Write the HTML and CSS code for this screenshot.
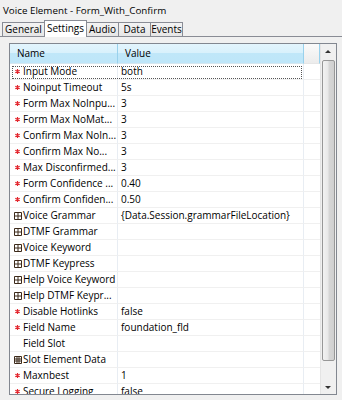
FILE: index.html
```html
<!DOCTYPE html>
<html>
<head>
<meta charset="utf-8">
<link rel="stylesheet" href="styles.css">
</head>
<body>
<div class="title">Voice Element - Form_With_Confirm</div>
<div class="tabs">
  <div class="tab t1">General</div>
  <div class="tab t2 active">Settings</div>
  <div class="tab t3">Audio</div>
  <div class="tab t4">Data</div>
  <div class="tab t5">Events</div>
</div>
<div class="panel">
  <div class="table">
    <div class="grid">
      <div class="row head">
        <div class="cell">Name</div>
        <div class="cell">Value</div>
        <div class="cell filler"></div>
      </div>
      <div class="row focus">
        <div class="cell name"><svg class="star" width="5" height="5" viewBox="0 0 5 5"><path d="M2.5 0v5M0.3 1.2l4.4 2.6M0.3 3.8l4.4-2.6" stroke="#e3262e" stroke-width="1.2"/></svg>Input Mode</div>
        <div class="cell">both</div><div class="cell filler"></div>
      </div>
      <div class="row">
        <div class="cell name"><svg class="star" width="5" height="5" viewBox="0 0 5 5"><path d="M2.5 0v5M0.3 1.2l4.4 2.6M0.3 3.8l4.4-2.6" stroke="#e3262e" stroke-width="1.2"/></svg>Noinput Timeout</div>
        <div class="cell">5s</div><div class="cell filler"></div>
      </div>
      <div class="row">
        <div class="cell name"><svg class="star" width="5" height="5" viewBox="0 0 5 5"><path d="M2.5 0v5M0.3 1.2l4.4 2.6M0.3 3.8l4.4-2.6" stroke="#e3262e" stroke-width="1.2"/></svg>Form Max NoInpu...</div>
        <div class="cell">3</div><div class="cell filler"></div>
      </div>
      <div class="row">
        <div class="cell name"><svg class="star" width="5" height="5" viewBox="0 0 5 5"><path d="M2.5 0v5M0.3 1.2l4.4 2.6M0.3 3.8l4.4-2.6" stroke="#e3262e" stroke-width="1.2"/></svg>Form Max NoMat...</div>
        <div class="cell">3</div><div class="cell filler"></div>
      </div>
      <div class="row">
        <div class="cell name"><svg class="star" width="5" height="5" viewBox="0 0 5 5"><path d="M2.5 0v5M0.3 1.2l4.4 2.6M0.3 3.8l4.4-2.6" stroke="#e3262e" stroke-width="1.2"/></svg>Confirm Max NoIn...</div>
        <div class="cell">3</div><div class="cell filler"></div>
      </div>
      <div class="row">
        <div class="cell name"><svg class="star" width="5" height="5" viewBox="0 0 5 5"><path d="M2.5 0v5M0.3 1.2l4.4 2.6M0.3 3.8l4.4-2.6" stroke="#e3262e" stroke-width="1.2"/></svg>Confirm Max No...</div>
        <div class="cell">3</div><div class="cell filler"></div>
      </div>
      <div class="row">
        <div class="cell name"><svg class="star" width="5" height="5" viewBox="0 0 5 5"><path d="M2.5 0v5M0.3 1.2l4.4 2.6M0.3 3.8l4.4-2.6" stroke="#e3262e" stroke-width="1.2"/></svg>Max Disconfirmed...</div>
        <div class="cell">3</div><div class="cell filler"></div>
      </div>
      <div class="row">
        <div class="cell name"><svg class="star" width="5" height="5" viewBox="0 0 5 5"><path d="M2.5 0v5M0.3 1.2l4.4 2.6M0.3 3.8l4.4-2.6" stroke="#e3262e" stroke-width="1.2"/></svg>Form Confidence ...</div>
        <div class="cell">0.40</div><div class="cell filler"></div>
      </div>
      <div class="row">
        <div class="cell name"><svg class="star" width="5" height="5" viewBox="0 0 5 5"><path d="M2.5 0v5M0.3 1.2l4.4 2.6M0.3 3.8l4.4-2.6" stroke="#e3262e" stroke-width="1.2"/></svg>Confirm Confiden...</div>
        <div class="cell">0.50</div><div class="cell filler"></div>
      </div>
      <div class="row">
        <div class="cell name"><svg class="ico" width="8" height="8" viewBox="0 0 8 8"><path d="M0.5 0.5h7v7h-7zM4 0.5v7M0.5 4h7" fill="none" stroke="#3c2a1a" stroke-width="1"/></svg>Voice Grammar</div>
        <div class="cell">{Data.Session.grammarFileLocation}</div><div class="cell filler"></div>
      </div>
      <div class="row">
        <div class="cell name"><svg class="ico" width="8" height="8" viewBox="0 0 8 8"><path d="M0.5 0.5h7v7h-7zM4 0.5v7M0.5 4h7" fill="none" stroke="#3c2a1a" stroke-width="1"/></svg>DTMF Grammar</div>
        <div class="cell"></div><div class="cell filler"></div>
      </div>
      <div class="row">
        <div class="cell name"><svg class="ico" width="8" height="8" viewBox="0 0 8 8"><path d="M0.5 0.5h7v7h-7zM4 0.5v7M0.5 4h7" fill="none" stroke="#3c2a1a" stroke-width="1"/></svg>Voice Keyword</div>
        <div class="cell"></div><div class="cell filler"></div>
      </div>
      <div class="row">
        <div class="cell name"><svg class="ico" width="8" height="8" viewBox="0 0 8 8"><path d="M0.5 0.5h7v7h-7zM4 0.5v7M0.5 4h7" fill="none" stroke="#3c2a1a" stroke-width="1"/></svg>DTMF Keypress</div>
        <div class="cell"></div><div class="cell filler"></div>
      </div>
      <div class="row">
        <div class="cell name"><svg class="ico" width="8" height="8" viewBox="0 0 8 8"><path d="M0.5 0.5h7v7h-7zM4 0.5v7M0.5 4h7" fill="none" stroke="#3c2a1a" stroke-width="1"/></svg>Help Voice Keyword</div>
        <div class="cell"></div><div class="cell filler"></div>
      </div>
      <div class="row">
        <div class="cell name"><svg class="ico" width="8" height="8" viewBox="0 0 8 8"><path d="M0.5 0.5h7v7h-7zM4 0.5v7M0.5 4h7" fill="none" stroke="#3c2a1a" stroke-width="1"/></svg>Help DTMF Keypr...</div>
        <div class="cell"></div><div class="cell filler"></div>
      </div>
      <div class="row">
        <div class="cell name"><svg class="star" width="5" height="5" viewBox="0 0 5 5"><path d="M2.5 0v5M0.3 1.2l4.4 2.6M0.3 3.8l4.4-2.6" stroke="#e3262e" stroke-width="1.2"/></svg>Disable Hotlinks</div>
        <div class="cell">false</div><div class="cell filler"></div>
      </div>
      <div class="row">
        <div class="cell name"><svg class="star" width="5" height="5" viewBox="0 0 5 5"><path d="M2.5 0v5M0.3 1.2l4.4 2.6M0.3 3.8l4.4-2.6" stroke="#e3262e" stroke-width="1.2"/></svg>Field Name</div>
        <div class="cell">foundation_fld</div><div class="cell filler"></div>
      </div>
      <div class="row">
        <div class="cell name"><span class="blank"></span>Field Slot</div>
        <div class="cell"></div><div class="cell filler"></div>
      </div>
      <div class="row">
        <div class="cell name"><svg class="ico" width="8" height="8" viewBox="0 0 8 8"><path d="M0.5 0.5h7v7h-7zM3 0.5v7M5 0.5v7M0.5 3h7M0.5 5h7" fill="none" stroke="#3c2a1a" stroke-width="1"/></svg>Slot Element Data</div>
        <div class="cell"></div><div class="cell filler"></div>
      </div>
      <div class="row">
        <div class="cell name"><svg class="star" width="5" height="5" viewBox="0 0 5 5"><path d="M2.5 0v5M0.3 1.2l4.4 2.6M0.3 3.8l4.4-2.6" stroke="#e3262e" stroke-width="1.2"/></svg>Maxnbest</div>
        <div class="cell">1</div><div class="cell filler"></div>
      </div>
      <div class="row">
        <div class="cell name"><svg class="star" width="5" height="5" viewBox="0 0 5 5"><path d="M2.5 0v5M0.3 1.2l4.4 2.6M0.3 3.8l4.4-2.6" stroke="#e3262e" stroke-width="1.2"/></svg>Secure Logging</div>
        <div class="cell">false</div><div class="cell filler"></div>
      </div>
    </div>
    <div class="scrollbar">
      <div class="arrow up"></div>
      <div class="track"><div class="thumb"></div></div>
      <div class="arrow down"></div>
    </div>
  </div>
</div>
</body>
</html>
```
FILE: styles.css
```css
html, body {
  margin: 0;
  padding: 0;
}
body {
  width: 342px;
  height: 400px;
  overflow: hidden;
  background: #f0f0f0;
  font-family: "Open Sans", "Noto Sans", sans-serif;
  font-size: 10px;
  color: #000;
}
.title {
  height: 17px;
  padding-top: 3px;
  padding-left: 3px;
  line-height: 16px;
  font-size: 9.8px;
}
.tabs {
  display: flex;
  align-items: flex-end;
  height: 16px;
  border-bottom: 1px solid #898c95;
  padding-left: 2px;
}
.tab {
  height: 13px;
  line-height: 13px;
  text-align: center;
  border: 1px solid #898c95;
  border-bottom: none;
  margin-right: -1px;
  background: linear-gradient(#f3f3f3, #e6e6e6);
  overflow: hidden;
}
.t1 { width: 41px; }
.t2 { width: 41px; }
.t3 { width: 31px; }
.t4 { width: 31px; }
.t5 { width: 31px; }
.tab.active {
  height: 16px;
  line-height: 15px;
  background: #fff;
  margin-bottom: -1px;
  position: relative;
  z-index: 1;
}
.panel {
  padding: 6px 5px 0 9px;
}
.table {
  height: 350px;
  border: 1px solid #828790;
  background: #fff;
  display: flex;
  overflow: hidden;
}
.grid {
  flex: 1;
  overflow: hidden;
}
.row {
  display: grid;
  grid-template-columns: 108px 186px 1fr;
  height: 16px;
  line-height: 15px;
}
.row .cell {
  border-bottom: 1px solid #f0f0f0;
  border-right: 1px solid #e8edf3;
  white-space: nowrap;
  overflow: hidden;
  padding-left: 3px;
}
.row .cell.filler {
  border-right: none;
}
.row .cell.name {
  padding-left: 5px;
  display: flex;
  align-items: center;
}
.row.head {
  height: 20px;
  line-height: 19px;
}
.row.head .cell {
  background: linear-gradient(#e3f5fd 0%, #d9f1fc 45%, #c0e7f9 50%, #bee6f9 100%);
  border-bottom: 1px solid #d5e7f0;
  border-right: 1px solid #99d1ec;
  padding-left: 7px;
}
.row.head .cell.filler {
  background: linear-gradient(#fafafa, #ececec);
  border-bottom: 1px solid #e6e6e6;
}
.row.focus {
  position: relative;
}
.row.focus::after {
  content: "";
  position: absolute;
  left: 2px;
  top: 2px;
  width: 290px;
  height: 13px;
  border: 1px dotted #555;
  box-sizing: border-box;
  pointer-events: none;
}
.star {
  flex: none;
  margin-right: 3px;
}
.blank {
  width: 8px;
  flex: none;
}
.ico {
  flex: none;
  margin-left: -1px;
  margin-right: 1px;
}
.scrollbar {
  width: 15px;
  border-left: 1px solid #e4e4e4;
  background: #f0f0f0;
  display: flex;
  flex-direction: column;
}
.arrow {
  height: 16px;
  position: relative;
  flex: none;
}
.arrow::after {
  content: "";
  position: absolute;
  left: 4px;
  width: 0;
  height: 0;
  border-left: 3px solid transparent;
  border-right: 3px solid transparent;
}
.arrow.up::after {
  top: 6px;
  border-bottom: 3px solid #333;
}
.arrow.down::after {
  top: 8px;
  border-top: 3px solid #333;
}
.track {
  flex: 1;
  padding: 0 1px;
}
.thumb {
  height: 301px;
  border: 1px solid #979797;
  border-radius: 2px;
  box-sizing: border-box;
  background: linear-gradient(90deg, #f2f2f2 0%, #e8e8e8 45%, #d6d6d6 55%, #d0d0d0 100%);
}
```
